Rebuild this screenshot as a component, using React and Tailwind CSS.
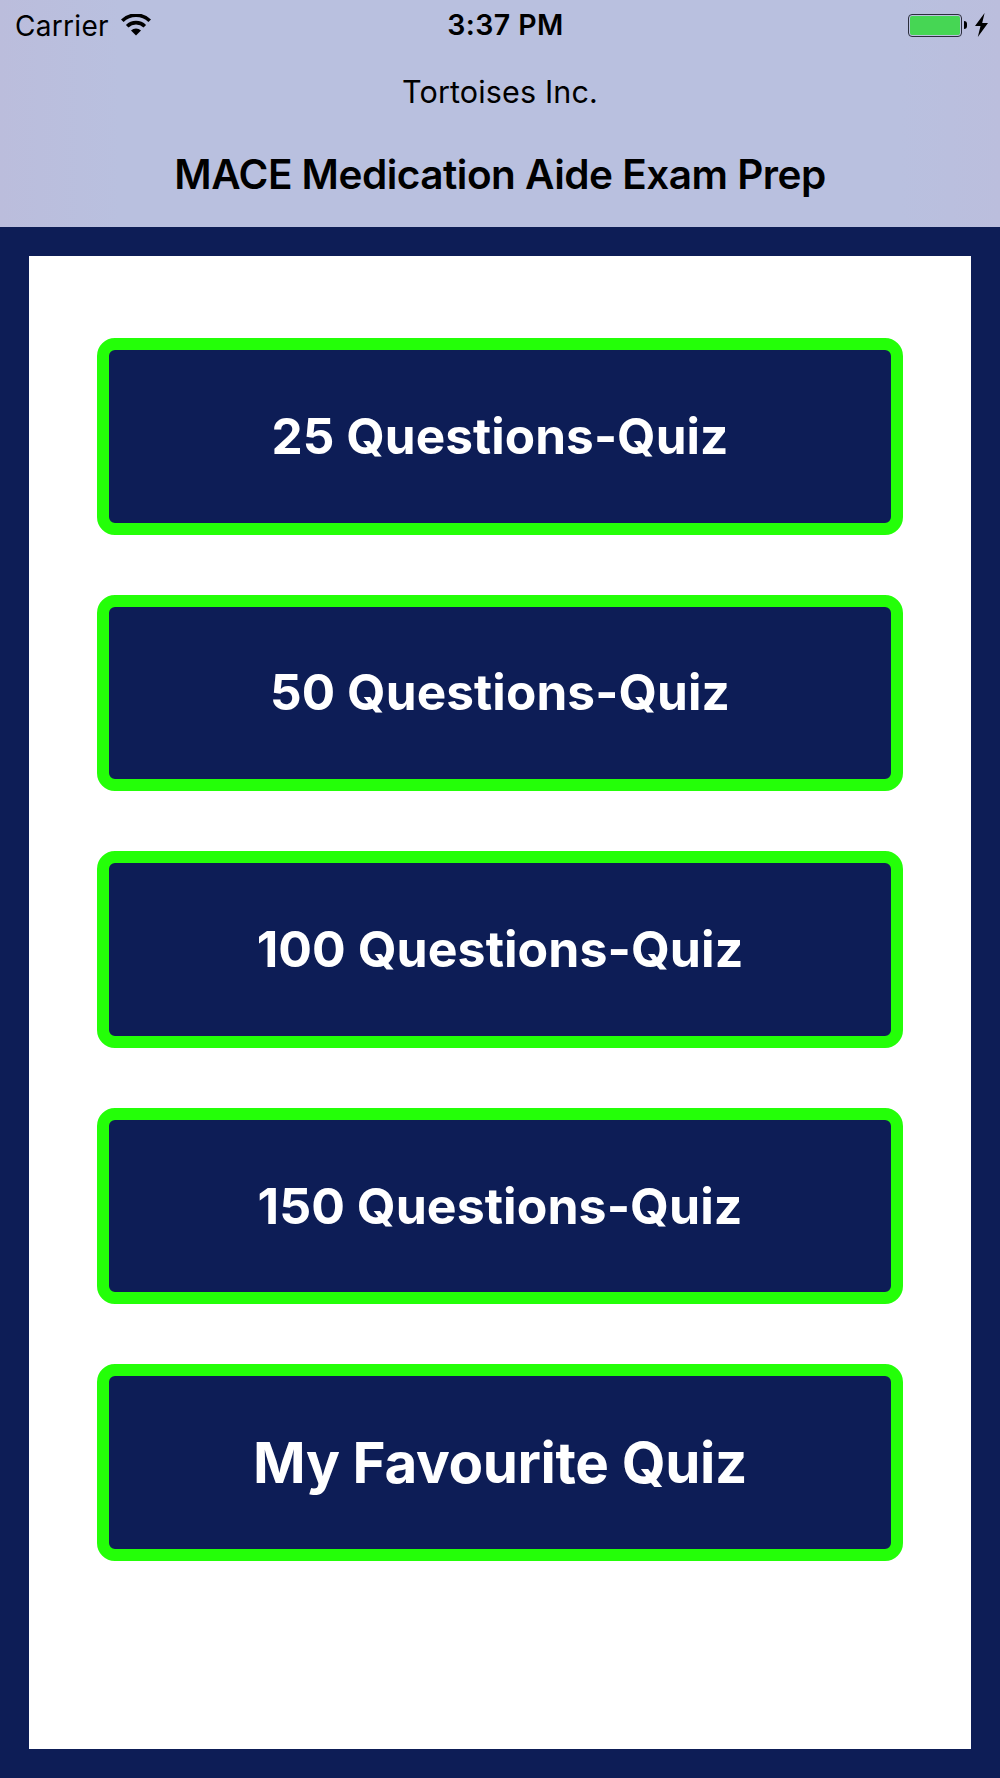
import React from 'react';

const quizzes = [
  { id: 1, label: '25 Questions-Quiz', text: 'text-[49.5px] tracking-[0.07px]' },
  { id: 2, label: '50 Questions-Quiz', text: 'text-[49.5px] tracking-[0.13px]' },
  { id: 3, label: '100 Questions-Quiz', text: 'text-[50px] tracking-[0.05px]' },
  { id: 4, label: '150 Questions-Quiz', text: 'text-[50px] tracking-[0.05px]' },
  { id: 5, label: 'My Favourite Quiz', text: 'text-[56.5px] tracking-[-0.36px] pt-[2px]' },
];

const WifiIcon = () => (
  <svg className="w-[30px] h-[22px]" viewBox="0 0 30 22" fill="none" stroke="#000" strokeWidth="3.7">
    <path d="M1.3 6.8a19.6 19.6 0 0 1 27.4 0" />
    <path d="M6.2 12.3a12.6 12.6 0 0 1 17.6 0" />
    <path d="M15 21.6l-5-5.2a7.3 7.3 0 0 1 10 0z" fill="#000" stroke="none" />
  </svg>
);

const Battery = () => (
  <div className="flex items-center">
    <div className="w-[54px] h-[23px] rounded-[4px] border border-[#2b2d3c] p-px">
      <div className="w-full h-full rounded-[2px] bg-[#46d654]"></div>
    </div>
    <div className="ml-[2px] w-[3px] h-[8px] rounded-r-full bg-black"></div>
    <svg className="ml-[8px] w-[13px] h-[24px]" viewBox="0 0 13 24">
      <path d="M9.6 0L0 13h5.5L2.8 24 13 10H7.2z" />
    </svg>
  </div>
);

const StatusBar = () => (
  <div className="grid grid-cols-3 items-center h-[50px] pl-[15px] pr-[12px]">
    <div className="flex items-center gap-[12px]">
      <span className="pt-px text-[28px] leading-none tracking-[0.3px]">Carrier</span>
      <WifiIcon />
    </div>
    <span className="pt-px pl-[8px] text-center text-[28.5px] leading-none font-semibold tracking-[0.4px]">3:37 PM</span>
    <div className="flex justify-end">
      <Battery />
    </div>
  </div>
);

const App = () => {
  return (
    <div className="flex flex-col w-[1000px] h-[1778px] bg-[#0d1d56] font-['Inter',sans-serif]">
      {/* Header */}
      <header className="h-[227px] shrink-0 text-black bg-[linear-gradient(to_right,#bbbddc,#b9c0df_12%,#b9c0df_90%,#bbbedd)]">
        <StatusBar />
        <p className="h-[82px] pt-[2px] flex items-center justify-center text-[30.5px] leading-none tracking-[0.15px]">
          Tortoises Inc.
        </p>
        <h1 className="h-[85px] pt-[2px] flex items-center justify-center text-[40.5px] leading-none font-semibold tracking-[-0.5px]">
          MACE Medication Aide Exam Prep
        </h1>
      </header>

      {/* Quiz list */}
      <main className="flex-1 mx-[29px] mt-[29px] mb-[29px] px-[68px] pt-[82px] bg-white flex flex-col gap-[60px]">
        {quizzes.map((quiz) => (
          <button
            key={quiz.id}
            className={`h-[196.5px] w-full shrink-0 rounded-[18px] border-[12px] border-[#24ff08] bg-[#0d1d56] text-white font-bold leading-none whitespace-nowrap ${quiz.text}`}
          >
            {quiz.label}
          </button>
        ))}
      </main>
    </div>
  );
};

export default App;
